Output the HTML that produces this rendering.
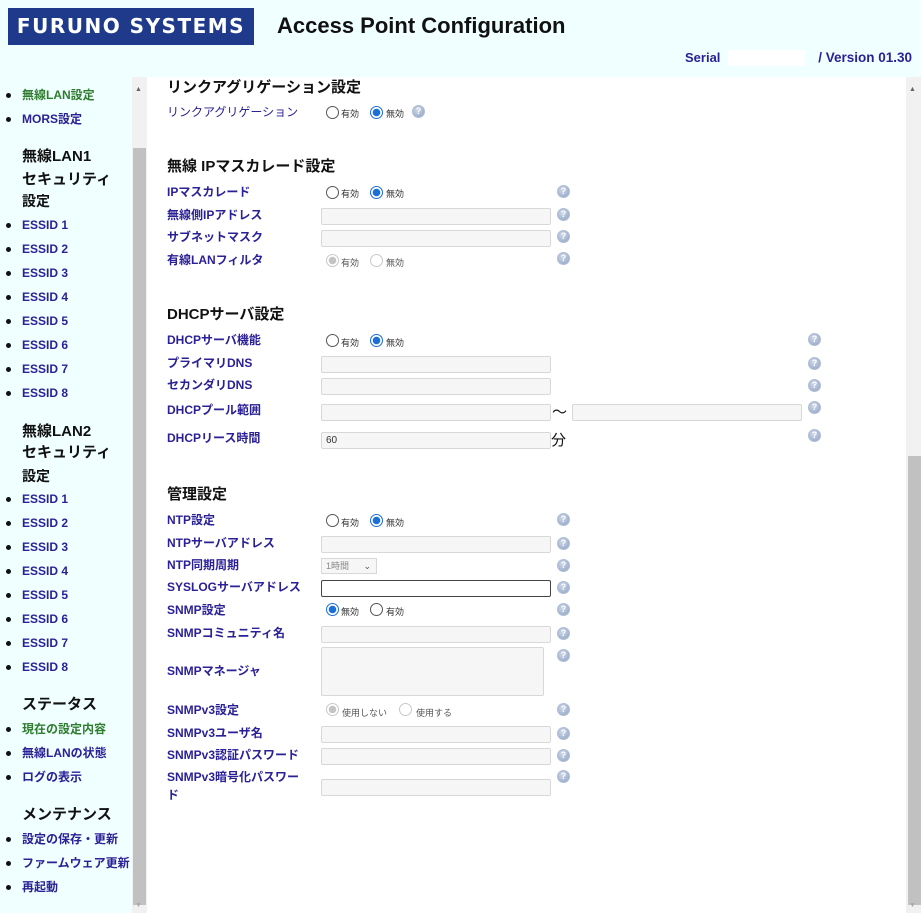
<!DOCTYPE html>
<html><head><meta charset="utf-8"><style>
*{margin:0;padding:0;box-sizing:border-box}
body{width:921px;height:913px;overflow:hidden;background:#fff;font-family:"Liberation Sans","Noto Sans CJK JP",sans-serif;position:relative}
.a{position:absolute;white-space:nowrap}
#hdr{position:absolute;left:0;top:0;width:921px;height:77px;background:#f0ffff}
#side{position:absolute;left:0;top:77px;width:132px;height:836px;background:#f0ffff}
.si{position:absolute;left:22px;font-size:12px;font-weight:bold;color:#2b2196;line-height:16px}
.si.g{color:#2e7d2e}
.dot{position:absolute;left:6px;width:5px;height:5px;border-radius:50%;background:#111}
.sh{position:absolute;left:22px;font-size:15px;font-weight:bold;color:#111;line-height:20px}
.h{position:absolute;left:167px;font-size:15px;font-weight:bold;color:#111;line-height:18px}
.l{position:absolute;left:167px;font-size:12px;font-weight:bold;color:#2b2196;line-height:16px}
.in{position:absolute;left:321px;width:230px;height:17px;border:1px solid #d8d8d8;background:#f6f6f6;border-radius:2px;font-size:10px;padding-left:4px;line-height:15px;color:#333}
.q{position:absolute;width:13px;height:13px;border-radius:50%;background:radial-gradient(circle at 40% 35%,#cdd7e8,#8fa3c4);border:1px solid #b0bdd3;color:#fff;font-size:9px;font-weight:bold;text-align:center;line-height:11px}
.r{position:absolute;width:13px;height:13px;border-radius:50%;border:1px solid #555;background:#fff}
.r.on{border:1px solid #1a6fd8;background:radial-gradient(circle,#1a6fd8 0 3.5px,#fff 4px)}
.r.dis{border-color:#c8c8c8}
.r.dison{border:1px solid #c8c8c8;background:radial-gradient(circle,#c4c4c4 0 3.5px,#fff 4px)}
.t{position:absolute;font-size:9px;color:#333;line-height:12px}
.t.dis{color:#555}
</style></head><body>
<div id="hdr"></div>
<div class="a" style="left:8px;top:8px;width:246px;height:37px;background:#1f3a8a;color:#fff;font-size:20px;font-weight:bold;letter-spacing:1.5px;line-height:37px;text-align:center;font-family:'DejaVu Sans',sans-serif">FURUNO SYSTEMS</div>
<div class="a" style="left:277px;top:13px;font-size:22px;font-weight:bold;color:#111;line-height:26px">Access Point Configuration</div>
<div class="a" style="left:685px;top:50px;font-size:13px;font-weight:bold;color:#2b2196;line-height:16px">Serial</div>
<div class="a" style="left:728px;top:50px;width:77px;height:16px;background:#fff"></div>
<div class="a" style="right:9px;top:50px;font-size:13.5px;font-weight:bold;color:#2b2196;line-height:16px">/ Version 01.30</div>

<div id="side"></div>
<div class="a" style="left:132px;top:77px;width:15px;height:836px;background:#f1f1f1"></div>
<div class="a" style="left:133px;top:148px;width:13px;height:757px;background:#c1c1c1"></div>
<div class="a" style="left:135px;top:86px;font-size:7px;color:#666">▲</div>
<div class="a" style="left:135px;top:902px;font-size:7px;color:#aaa">▼</div>
<div class="a" style="left:906px;top:77px;width:15px;height:836px;background:#f1f1f1"></div>
<div class="a" style="left:908px;top:456px;width:13px;height:449px;background:#c1c1c1"></div>
<div class="a" style="left:909px;top:86px;font-size:7px;color:#666">▲</div>
<div class="a" style="left:909px;top:902px;font-size:7px;color:#aaa">▼</div>

<!-- sidebar -->
<div class="dot" style="top:93px"></div><div class="si g" style="top:87px">無線LAN設定</div>
<div class="dot" style="top:117px"></div><div class="si" style="top:111px">MORS設定</div>
<div class="sh" style="top:147px">無線LAN1</div>
<div class="sh" style="top:170px">セキュリティ</div>
<div class="sh" style="top:191px;font-size:14px">設定</div>
<div class="dot" style="top:223px"></div><div class="si" style="top:217px">ESSID 1</div>
<div class="dot" style="top:247px"></div><div class="si" style="top:241px">ESSID 2</div>
<div class="dot" style="top:271px"></div><div class="si" style="top:265px">ESSID 3</div>
<div class="dot" style="top:295px"></div><div class="si" style="top:289px">ESSID 4</div>
<div class="dot" style="top:319px"></div><div class="si" style="top:313px">ESSID 5</div>
<div class="dot" style="top:343px"></div><div class="si" style="top:337px">ESSID 6</div>
<div class="dot" style="top:367px"></div><div class="si" style="top:361px">ESSID 7</div>
<div class="dot" style="top:391px"></div><div class="si" style="top:385px">ESSID 8</div>
<div class="sh" style="top:422px">無線LAN2</div>
<div class="sh" style="top:443px">セキュリティ</div>
<div class="sh" style="top:466px;font-size:14px">設定</div>
<div class="dot" style="top:497px"></div><div class="si" style="top:491px">ESSID 1</div>
<div class="dot" style="top:521px"></div><div class="si" style="top:515px">ESSID 2</div>
<div class="dot" style="top:545px"></div><div class="si" style="top:539px">ESSID 3</div>
<div class="dot" style="top:569px"></div><div class="si" style="top:563px">ESSID 4</div>
<div class="dot" style="top:593px"></div><div class="si" style="top:587px">ESSID 5</div>
<div class="dot" style="top:617px"></div><div class="si" style="top:611px">ESSID 6</div>
<div class="dot" style="top:641px"></div><div class="si" style="top:635px">ESSID 7</div>
<div class="dot" style="top:665px"></div><div class="si" style="top:659px">ESSID 8</div>
<div class="sh" style="top:695px">ステータス</div>
<div class="dot" style="top:727px"></div><div class="si g" style="top:721px">現在の設定内容</div>
<div class="dot" style="top:751px"></div><div class="si" style="top:745px">無線LANの状態</div>
<div class="dot" style="top:775px"></div><div class="si" style="top:769px">ログの表示</div>
<div class="sh" style="top:805px">メンテナンス</div>
<div class="dot" style="top:837px"></div><div class="si" style="top:831px">設定の保存・更新</div>
<div class="dot" style="top:861px"></div><div class="si" style="top:855px">ファームウェア更新</div>
<div class="dot" style="top:885px"></div><div class="si" style="top:879px">再起動</div>

<!-- content -->
<div class="h" style="top:79px">リンクアグリゲーション設定</div>
<div class="l" style="top:104px;font-weight:normal">リンクアグリゲーション</div>
<div class="r" style="left:326px;top:106px"></div><div class="t" style="left:341px;top:108px">有効</div>
<div class="r on" style="left:370px;top:106px"></div><div class="t" style="left:386px;top:108px">無効</div>
<div class="q" style="left:412px;top:105px">?</div>

<div class="h" style="top:158px">無線 IPマスカレード設定</div>
<div class="l" style="top:184px">IPマスカレード</div>
<div class="r" style="left:326px;top:186px"></div><div class="t" style="left:341px;top:188px">有効</div>
<div class="r on" style="left:370px;top:186px"></div><div class="t" style="left:386px;top:188px">無効</div>
<div class="q" style="left:557px;top:185px">?</div>
<div class="l" style="top:207px">無線側IPアドレス</div><div class="in" style="top:208px"></div><div class="q" style="left:557px;top:208px">?</div>
<div class="l" style="top:229px">サブネットマスク</div><div class="in" style="top:230px"></div><div class="q" style="left:557px;top:230px">?</div>
<div class="l" style="top:252px">有線LANフィルタ</div>
<div class="r dison" style="left:326px;top:254px"></div><div class="t dis" style="left:341px;top:257px">有効</div>
<div class="r dis" style="left:370px;top:254px"></div><div class="t dis" style="left:386px;top:257px">無効</div>
<div class="q" style="left:557px;top:252px">?</div>

<div class="h" style="top:306px">DHCPサーバ設定</div>
<div class="l" style="top:332px">DHCPサーバ機能</div>
<div class="r" style="left:326px;top:334px"></div><div class="t" style="left:341px;top:337px">有効</div>
<div class="r on" style="left:370px;top:334px"></div><div class="t" style="left:386px;top:337px">無効</div>
<div class="q" style="left:808px;top:333px">?</div>
<div class="l" style="top:355px">プライマリDNS</div><div class="in" style="top:356px"></div><div class="q" style="left:808px;top:357px">?</div>
<div class="l" style="top:377px">セカンダリDNS</div><div class="in" style="top:378px"></div><div class="q" style="left:808px;top:379px">?</div>
<div class="l" style="top:402px">DHCPプール範囲</div><div class="in" style="top:404px"></div>
<div class="a" style="left:552px;top:401px;font-size:15px;color:#111">〜</div>
<div class="in" style="left:572px;top:404px"></div><div class="q" style="left:808px;top:401px">?</div>
<div class="l" style="top:430px">DHCPリース時間</div><div class="in" style="top:432px">60</div>
<div class="a" style="left:551px;top:429px;font-size:15px;color:#111">分</div>
<div class="q" style="left:808px;top:429px">?</div>

<div class="h" style="top:486px">管理設定</div>
<div class="l" style="top:512px">NTP設定</div>
<div class="r" style="left:326px;top:514px"></div><div class="t" style="left:341px;top:517px">有効</div>
<div class="r on" style="left:370px;top:514px"></div><div class="t" style="left:386px;top:517px">無効</div>
<div class="q" style="left:557px;top:513px">?</div>
<div class="l" style="top:535px">NTPサーバアドレス</div><div class="in" style="top:536px"></div><div class="q" style="left:557px;top:537px">?</div>
<div class="l" style="top:557px">NTP同期周期</div>
<div class="a" style="left:321px;top:558px;width:56px;height:16px;border:1px solid #d8d8d8;background:#f6f6f6;font-size:9px;color:#888;padding-left:4px;line-height:14px">1時間 <span style="position:absolute;right:5px;top:0;color:#555">⌄</span></div>
<div class="q" style="left:557px;top:559px">?</div>
<div class="l" style="top:579px">SYSLOGサーバアドレス</div>
<div class="in" style="top:580px;background:#fff;border-color:#444"></div><div class="q" style="left:557px;top:581px">?</div>
<div class="l" style="top:602px">SNMP設定</div>
<div class="r on" style="left:326px;top:603px"></div><div class="t" style="left:341px;top:606px">無効</div>
<div class="r" style="left:370px;top:603px"></div><div class="t" style="left:386px;top:606px">有効</div>
<div class="q" style="left:557px;top:603px">?</div>
<div class="l" style="top:625px">SNMPコミュニティ名</div><div class="in" style="top:626px"></div><div class="q" style="left:557px;top:627px">?</div>
<div class="l" style="top:663px">SNMPマネージャ</div>
<div class="in" style="top:647px;width:223px;height:49px"></div><div class="q" style="left:557px;top:649px">?</div>
<div class="l" style="top:702px">SNMPv3設定</div>
<div class="r dison" style="left:326px;top:703px"></div><div class="t dis" style="left:342px;top:707px">使用しない</div>
<div class="r dis" style="left:399px;top:703px"></div><div class="t dis" style="left:416px;top:707px">使用する</div>
<div class="q" style="left:557px;top:703px">?</div>
<div class="l" style="top:725px">SNMPv3ユーザ名</div><div class="in" style="top:726px"></div><div class="q" style="left:557px;top:727px">?</div>
<div class="l" style="top:747px">SNMPv3認証パスワード</div><div class="in" style="top:748px"></div><div class="q" style="left:557px;top:749px">?</div>
<div class="l" style="top:769px">SNMPv3暗号化パスワー</div>
<div class="l" style="top:787px">ド</div>
<div class="in" style="top:779px"></div><div class="q" style="left:557px;top:770px">?</div>
</body></html>
